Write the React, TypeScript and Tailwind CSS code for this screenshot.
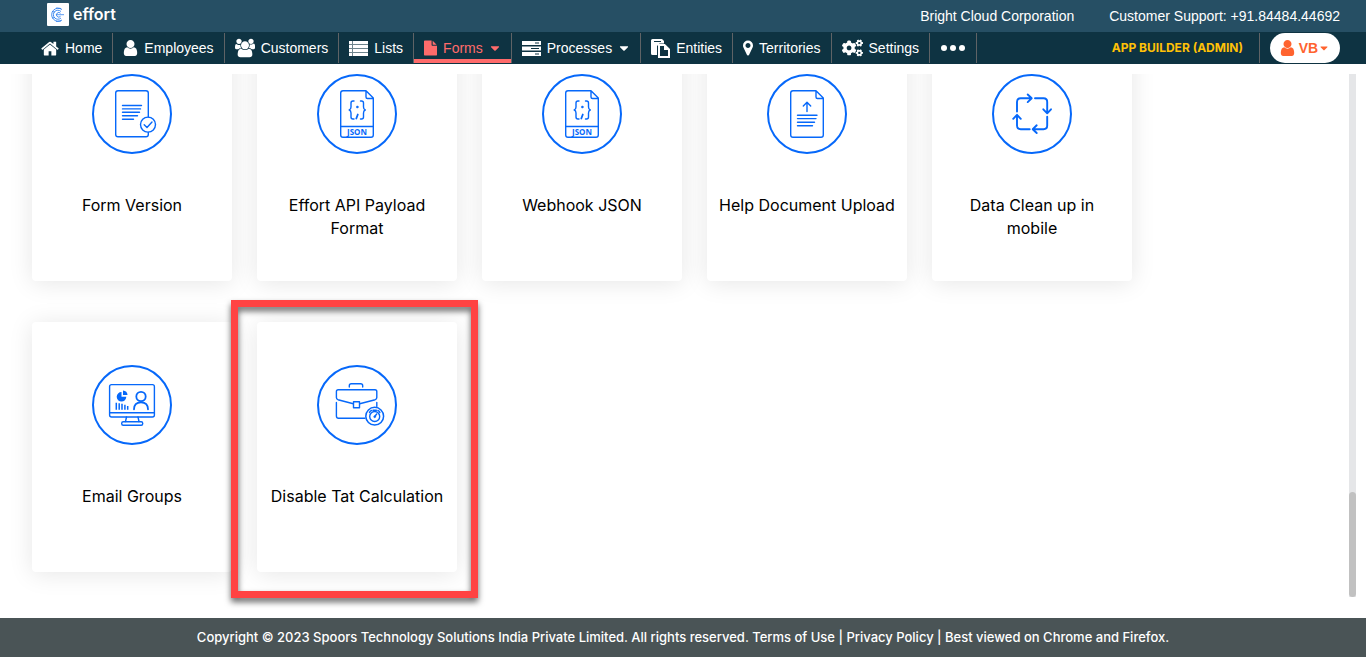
import type React from "react";
import { FaCaretDown, FaCogs } from "react-icons/fa";

interface GlyphProps {
  viewBox: string;
  className: string;
  children: React.ReactNode;
}

function Glyph({ viewBox, className, children }: GlyphProps) {
  return (
    <svg viewBox={viewBox} className={className} fill="currentColor" aria-hidden="true">
      {children}
    </svg>
  );
}

const HomeIcon = () => (
  <Glyph viewBox="64 192 1664 1400" className="h-[15px] w-[18px]">
    <path d="M1472 992v480q0 26-19 45t-45 19h-384v-384h-256v384h-384q-26 0-45-19t-19-45v-480q0-1 .5-3t.5-3l575-474 575 474q1 2 1 6zm223-69l-62 74q-8 9-21 11h-3q-13 0-21-7l-692-577-692 577q-12 8-24 7-13-2-21-11l-62-74q-8-10-7-23.5t11-21.5l719-599q32-26 76-26t76 26l244 204v-195q0-14 9-23t23-9h192q14 0 23 9t9 23v408l219 182q10 8 11 21.5t-7 23.5z" />
  </Glyph>
);

const UserIcon = () => (
  <Glyph viewBox="256 128 1280 1536" className="h-4 w-[15px]">
    <path d="M1536 1399q0 109-62.5 187t-150.5 78h-854q-88 0-150.5-78t-62.5-187q0-85 8.5-160.5t31.5-152 58.5-131 94-89 134.5-34.5q131 128 313 128t313-128q76 0 134.5 34.5t94 89 58.5 131 31.5 152 8.5 160.5zm-256-887q0 159-112.5 271.5t-271.5 112.5-271.5-112.5-112.5-271.5 112.5-271.5 271.5-112.5 271.5 112.5 112.5 271.5z" />
  </Glyph>
);

const UsersIcon = () => (
  <Glyph viewBox="64 0 1920 1792" className="h-5 w-5">
    <path d="M657 896q-162 5-265 128h-134q-82 0-138-40.5t-56-118.5q0-353 124-353 6 0 43.5 21t97.5 42.5 119 21.5q67 0 133-23-5 37-5 66 0 159 90 293zm1071 637q0 120-73 189.5t-194 69.5h-874q-121 0-194-69.5t-73-189.5q0-53 3.5-103.5t14-109 26.5-108.5 43-97.5 62-81 85.5-53.5 111.5-20q10 0 43 21.5t73 48 107 48 135 21.5 135-21.5 107-48 73-48 43-21.5q61 0 111.5 20t85.5 53.5 62 81 43 97.5 26.5 108.5 14 109 3.5 103.5zm-1024-1277q0 106-75 181t-181 75-181-75-75-181 75-181 181-75 181 75 75 181zm704 384q0 159-112.5 271.5t-271.5 112.5-271.5-112.5-112.5-271.5 112.5-271.5 271.5-112.5 271.5 112.5 112.5 271.5zm576 225q0 78-56 118.5t-138 40.5h-134q-103-123-265-128 90-134 90-293 0-29-5-66 66 23 133 23 59 0 119-21.5t97.5-42.5 43.5-21q124 0 124 353zm-128-609q0 106-75 181t-181 75-181-75-75-181 75-181 181-75 181 75 75 181z" />
  </Glyph>
);

const ListIcon = () => (
  <Glyph viewBox="0 0 19 15" className="h-[15px] w-[19px]">
    <path d="M0 0h19v15H0z" opacity="0.4" />
    <path d="M0 0h3v3H0zM4 0h15v3H4zM0 4h3v3H0zM4 4h15v3H4zM0 8h3v3H0zM4 8h15v3H4zM0 12h3v3H0zM4 12h15v3H4z" />
  </Glyph>
);

const FileIcon = () => (
  <Glyph viewBox="128 0 1536 1792" className="h-4 w-[13px]">
    <path d="M1152 512v-472q22 14 36 28l408 408q14 14 28 36h-472zm-128 32q0 40 28 68t68 28h544v1056q0 40-28 68t-68 28h-1344q-40 0-68-28t-28-68v-1600q0-40 28-68t68-28h800v544z" />
  </Glyph>
);

const ServerIcon = () => (
  <Glyph viewBox="0 0 19 15" className="h-[15px] w-[19px]">
    <path fillRule="evenodd" d="M0 0h19v4H0zM13 1.5h4v1h-4zM0 5.500h19v4H0zM9 7h8v1H9zM0 11h19v4H0zM13 12.500h4v1h-4z" />
  </Glyph>
);

const EntitiesIcon = () => (
  <Glyph viewBox="0 0 19 19" className="h-[19px] w-[19px]">
    <path d="M1.500 0H11l2 2v2.500H8.500L6 7v9H1.500Q0 16 0 14.500v-13Q0 0 1.500 0zM3 2v1h7V2z" fillRule="evenodd" />
    <path d="M8 6h5.500l4.500 4.500V18H8z" fill="none" stroke="currentColor" strokeWidth="2" />
    <path d="M13 5v6h6z" />
  </Glyph>
);

const PinIcon = () => (
  <Glyph viewBox="384 128 1024 1536" className="h-4 w-[10px]">
    <path d="M1152 640q0-106-75-181t-181-75-181 75-75 181 75 181 181 75 181-75 75-181zm256 0q0 109-33 179l-364 774q-16 33-47.5 52t-67.5 19-67.5-19-46.5-52l-365-774q-33-70-33-179 0-212 150-362t362-150 362 150 150 362z" />
  </Glyph>
);

const DotsIcon = () => (
  <Glyph viewBox="0 0 24 6" className="h-[6px] w-6">
    <circle cx="3" cy="3" r="3" />
    <circle cx="12" cy="3" r="3" />
    <circle cx="21" cy="3" r="3" />
  </Glyph>
);

interface NavItem {
  label: string;
  icon: React.ReactNode;
  active?: boolean;
  caret?: boolean;
}

const navItems: NavItem[] = [
  { label: "Home", icon: <HomeIcon /> },
  { label: "Employees", icon: <UserIcon /> },
  { label: "Customers", icon: <UsersIcon /> },
  { label: "Lists", icon: <ListIcon /> },
  { label: "Forms", icon: <FileIcon />, active: true, caret: true },
  { label: "Processes", icon: <ServerIcon />, caret: true },
  { label: "Entities", icon: <EntitiesIcon /> },
  { label: "Territories", icon: <PinIcon /> },
  { label: "Settings", icon: <FaCogs className="h-5 w-[21px]" /> },
];

// All card drawings share an 80x80 canvas that fills the circle.
function CardIcon({ children }: { children: React.ReactNode }) {
  return (
    <svg
      viewBox="0 0 80 80"
      className="h-20 w-20 text-[#0668fa]"
      fill="none"
      stroke="currentColor"
      strokeWidth="1.4"
      strokeLinecap="round"
      strokeLinejoin="round"
      aria-hidden="true"
    >
      <circle cx="40" cy="40" r="39" strokeWidth="2" />
      {children}
    </svg>
  );
}

const FoldedPage = () => (
  <path d="M49 16.700H26q-2.300 0-2.300 2.300v42q0 2.300 2.300 2.300h28q2.300 0 2.300-2.300V24zM49 16.700V23q0 1.500 1.500 1.500h5.800" />
);

const FormVersionIcon = () => (
  <CardIcon>
    <path d="M56.300 43V19q0-2.300-2.300-2.300H26q-2.300 0-2.300 2.300v41.500q0 2.300 2.300 2.300h28q2.300 0 2.300-2.300V58.500" />
    <path d="M30.500 31.500h19M30.500 34.900h18M30.500 38.300h17M30.500 41.700h15M30.500 45.300h11" />
    <circle cx="56" cy="50.600" r="7.500" />
    <path d="M52.200 50.800l2.800 2.700 5-5.500" />
  </CardIcon>
);

const JsonIcon = () => (
  <CardIcon>
    <FoldedPage />
    <path d="M24 52.500h32" />
    <path d="M37 27h-1q-2 0-2 2v4q0 2.500-1.800 3 1.800.5 1.800 3v4q0 2 2 2h1M43.500 27h1q2 0 2 2v4q0 2.500 1.800 3-1.800.5-1.800 3v4q0 2-2 2h-1" />
    <circle cx="40.300" cy="33" r="1" fill="currentColor" strokeWidth="0.5" />
    <path d="M40.800 40.500l-1.500 4" strokeWidth="1.800" />
    <text
      x="40"
      y="61"
      textAnchor="middle"
      fill="currentColor"
      stroke="none"
      className="font-['Open_Sans',sans-serif] text-[8px] font-bold"
    >
      JSON
    </text>
  </CardIcon>
);

const UploadIcon = () => (
  <CardIcon>
    <FoldedPage />
    <path d="M40 37.500V28.500M36.300 32l3.700-3.700 3.700 3.700" />
    <path d="M30.500 41.200h19.500M30.500 44.600h18.500M30.500 48.200h17M30.500 51.700h15" />
  </CardIcon>
);

const CleanUpIcon = () => (
  <CardIcon>
    <g strokeWidth="1.900">
      <path d="M25 37.500V28q0-3.700 3.700-3.700H39.500M35.700 20.500l4 3.800-4 3.800" />
      <path d="M43 24.300h8.500q3.700 0 3.700 3.700v11M51.300 35.300l3.900 4 3.800-4" />
      <path d="M55.200 42.800v8.700q0 3.700-3.700 3.700H41M44.700 51.300l-4 3.900 4 3.800" />
      <path d="M37.700 55.200h-9q-3.700 0-3.700-3.700V41.200M21.200 44.800l3.800-4 3.800 4" />
    </g>
  </CardIcon>
);

const EmailGroupsIcon = () => (
  <CardIcon>
    <rect x="17.600" y="19.600" width="44.800" height="32.400" rx="2" />
    <path d="M18 47.700h44M34.500 52l-1 4.500M46 52l1 4.500" />
    <rect x="29.700" y="56.700" width="21" height="3.600" rx="1.500" />
    <path d="M29.500 27v4.800h4.800a4.800 4.800 0 1 1-4.800-4.800z" fill="currentColor" stroke="none" />
    <path d="M31 25.500a4.800 4.800 0 0 1 4.500 4.500H31z" fill="currentColor" stroke="none" />
    <path d="M24.300 37.800v7M27.200 38.300v6.500M30 38.800v6M32.900 39.800v5M35.700 41v3.800" strokeWidth="1.500" strokeLinecap="butt" />
    <circle cx="49" cy="31.500" r="4.700" strokeWidth="1.800" />
    <path d="M42 44.300q0-7 7-7t7 7" strokeWidth="1.800" />
  </CardIcon>
);

const TatIcon = () => (
  <CardIcon>
    <path d="M32.300 22v-1.300q0-2 2-2h9.400q2 0 2 2V22" />
    <path d="M36.300 38.700l-15.300-4q-1.600-.5-1.600-2.200V26.500q0-1.800 1.800-1.800H58q1.800 0 1.800 1.800v6q0 1.700-1.600 2.200l-15.500 4" />
    <rect x="36.500" y="36.700" width="6" height="6" />
    <path d="M19.400 37.500v13.500q0 2.200 2.200 2.200H48M59.800 37.500v4" />
    <circle cx="57.700" cy="51.200" r="8.900" strokeWidth="1.500" />
    <circle cx="57.700" cy="51.500" r="5" />
    <path d="M57.700 51.500l2-2.500M56 45.200h3.400M52.500 47.500q.5-1.500 2-2M62.900 47.500q-.5-1.500-2-2" />
    <circle cx="57.700" cy="51.700" r="1" fill="currentColor" strokeWidth="0.5" />
  </CardIcon>
);

interface FormCard {
  title: string;
  icon: React.ReactNode;
  highlighted?: boolean;
}

const cards: FormCard[] = [
  { title: "Form Version", icon: <FormVersionIcon /> },
  { title: "Effort API Payload Format", icon: <JsonIcon /> },
  { title: "Webhook JSON", icon: <JsonIcon /> },
  { title: "Help Document Upload", icon: <UploadIcon /> },
  { title: "Data Clean up in mobile", icon: <CleanUpIcon /> },
  { title: "Email Groups", icon: <EmailGroupsIcon /> },
  { title: "Disable Tat Calculation", icon: <TatIcon />, highlighted: true },
];

function Logo() {
  return (
    <a href="#" className="flex items-center gap-1">
      <svg viewBox="0 0 22 23" className="h-[23px] w-[22px]" fill="none" stroke="#2f80ed" aria-hidden="true">
        <rect width="22" height="23" rx="1" fill="#fff" stroke="none" />
        <path d="M15 6.500a6.500 6.500 0 1 0 0 10.500M14 8.500a4.500 4.500 0 1 0 0 6.500M13.500 10.300a2.300 2.300 0 1 0 0 3" strokeWidth="0.900" />
        <path d="M9 11.700h8M5 8.500l3 .5M5 15l3-.5M9 5l5 .5M9 18.500l5-.5" strokeWidth="0.800" />
      </svg>
      <span className="text-[16px] leading-6 font-semibold">effort</span>
    </a>
  );
}

function TopBar() {
  return (
    <div className="flex h-8 items-center justify-between bg-[#264f64] pr-[26px] pl-[47px] font-['Inter',sans-serif] text-white">
      <div className="pb-1">
        <Logo />
      </div>
      <div className="flex gap-[35px] font-['Liberation_Sans',sans-serif] text-[14px]">
        <span>Bright Cloud Corporation</span>
        <span>Customer Support: +91.84484.44692</span>
      </div>
    </div>
  );
}

function NavBar() {
  return (
    <nav className="flex h-8 justify-between bg-[#0e3342] py-px pr-[26px] pl-[31px] font-['Liberation_Sans',sans-serif] text-[14px] text-white">
      <div className="flex">
        {navItems.map(({ label, icon, active, caret }) => (
          <a
            key={label}
            href="#"
            className={
              active
                ? "flex items-center gap-[6px] border-r border-[#5f6366] px-[10px] text-[#ff6b6b] shadow-[inset_0_-4px_0_#ff6b6b]"
                : "flex items-center gap-[6px] border-r border-[#5f6366] px-[10px]"
            }
          >
            {icon}
            {label}
            {caret && <FaCaretDown className="h-[14px] w-3" />}
          </a>
        ))}
        <a href="#" aria-label="More" className="flex items-center border-r border-[#5f6366] px-[11px]">
          <DotsIcon />
        </a>
      </div>
      <div className="flex">
        <a
          href="#"
          className="flex items-center border-r border-[#5f6366] pr-4 font-['Inter',sans-serif] text-[12px] font-bold text-[#ffc107]"
        >
          APP BUILDER (ADMIN)
        </a>
        <button
          type="button"
          className="ml-[10px] flex w-[70px] items-center justify-center gap-1 rounded-full bg-white font-bold text-[#ff632f]"
        >
          <UserIcon />
          <span className="flex items-center">
            VB
            <FaCaretDown className="h-3 w-3" />
          </span>
        </button>
      </div>
    </nav>
  );
}

function Card({ title, icon, highlighted }: FormCard) {
  return (
    <a
      href="#"
      className="relative flex h-[250px] w-[200px] flex-col items-center gap-10 rounded bg-white px-[11px] pt-[43px] text-center text-[16px] leading-[23px] text-black shadow-[0_2px_25px_rgba(0,0,0,0.1)]"
    >
      {icon}
      <span>{title}</span>
      {highlighted && (
        <span className="absolute -top-[22px] -right-[21px] -bottom-[26px] -left-[26px] border-[7px] border-[#ff4343] drop-shadow-[0_4px_3px_rgba(0,0,0,0.6)]" />
      )}
    </a>
  );
}

export default function App() {
  return (
    <div className="flex h-screen flex-col overflow-hidden bg-white font-['Inter',sans-serif]">
      <header className="relative z-10 shrink-0 bg-white pb-[10px]">
        <TopBar />
        <NavBar />
      </header>

      {/* The list is scrolled to its end, so the first row runs up under the header. */}
      <main className="flex min-h-0 flex-1 pr-[10px] pb-[21px]">
        <div className="flex min-w-0 flex-1 flex-col justify-end pb-[25px] pl-8">
          <div className="flex flex-wrap gap-x-[25px] gap-y-[41px]">
            {cards.map((card) => (
              <Card key={card.title} {...card} />
            ))}
          </div>
        </div>
        <div className="flex w-[7px] flex-col justify-end bg-[#e5e6e8]">
          <div className="h-1/5 rounded-full bg-[#c1c1c1]" />
        </div>
      </main>

      <footer className="relative z-10 shrink-0 bg-[#4a5456] px-4 py-2 text-center text-[13px] leading-[23px] font-medium text-white">
        Copyright © 2023 Spoors Technology Solutions India Private Limited. All rights reserved.{" "}
        <a href="#">Terms of Use</a> | <a href="#">Privacy Policy</a> | Best viewed on Chrome and Firefox.
      </footer>
    </div>
  );
}
